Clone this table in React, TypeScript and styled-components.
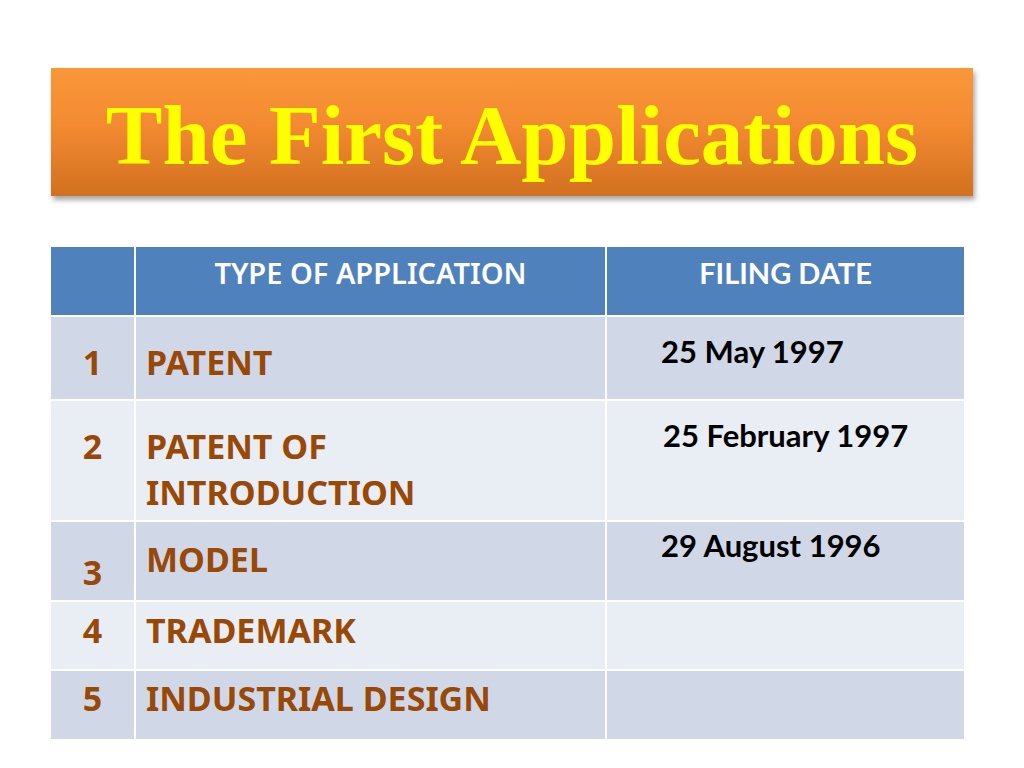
import styled, { createGlobalStyle } from 'styled-components';

const GlobalStyle = createGlobalStyle`
  html, body {
    margin: 0;
    padding: 0;
    background: #fff;
  }
`;

const StyledPage = styled.div`
  width: 1024px;
  height: 768px;
  padding: 68px 0 0 51px;
  box-sizing: border-box;
  display: flex;
  flex-direction: column;
  gap: 51px;
`;

const StyledTitleBar = styled.div`
  width: 922px;
  height: 128px;
  display: flex;
  align-items: center;
  justify-content: center;
  background: linear-gradient(180deg, #fa973a 0%, #f38a31 45%, #d2701f 100%);
  box-shadow: 2px 4px 5px rgba(0, 0, 0, 0.35);
`;

const StyledTitle = styled.h1`
  margin: 0;
  color: #ffff00;
  font-family: 'Liberation Serif', serif;
  font-size: 85px;
  font-weight: 700;
  line-height: 1;
  padding-top: 6px;
`;

const StyledTable = styled.div`
  width: 913px;
  display: grid;
  grid-template-columns: 83px 469px 357px;
  grid-template-rows: 68px 82px 119px 78px 67px 68px;
  gap: 2px;
`;

const StyledHeadCell = styled.div<{ $lato?: boolean }>`
  background: #4f81bd;
  color: #fff;
  font-family: ${p => (p.$lato ? 'Lato' : "'Noto Sans'")}, sans-serif;
  font-weight: ${p => (p.$lato ? 700 : 600)};
  font-size: 29px;
  text-align: center;
  padding-top: 7px;
  line-height: 38px;
`;

const StyledCell = styled.div<{ $alt: boolean; $top: number }>`
  background: ${p => (p.$alt ? '#e9edf4' : '#d0d8e8')};
  padding-top: ${p => p.$top}px;
  box-sizing: border-box;
`;

const StyledNum = styled(StyledCell)`
  color: #984807;
  font-family: 'Noto Sans', sans-serif;
  font-weight: 700;
  font-size: 34px;
  line-height: 46px;
  text-align: center;
`;

const StyledType = styled(StyledCell)`
  color: #984807;
  font-family: 'Noto Sans', sans-serif;
  font-weight: 700;
  font-size: 34px;
  line-height: 46px;
  padding-left: 10px;
`;

const StyledDate = styled(StyledCell)`
  color: #000;
  font-family: Lato, sans-serif;
  font-weight: 700;
  font-size: 31px;
  line-height: 40px;
  padding-left: ${p => (p.$alt ? 56 : 54)}px;
`;

const rows = [
  { n: '1', type: 'PATENT', date: '25 May 1997', numTop: 22, typeTop: 22, dateTop: 14 },
  { n: '2', type: 'PATENT OF\nINTRODUCTION', date: '25 February 1997', numTop: 22, typeTop: 22, dateTop: 14 },
  { n: '3', type: 'MODEL', date: '29 August 1996', numTop: 27, typeTop: 14, dateTop: 3 },
  { n: '4', type: 'TRADEMARK', date: '', numTop: 5, typeTop: 5, dateTop: 0 },
  { n: '5', type: 'INDUSTRIAL DESIGN', date: '', numTop: 4, typeTop: 4, dateTop: 0 },
];

export default function App() {
  return (
    <>
      <GlobalStyle />
      <StyledPage>
        <StyledTitleBar>
          <StyledTitle>The First Applications</StyledTitle>
        </StyledTitleBar>
        <StyledTable>
          <StyledHeadCell />
          <StyledHeadCell>TYPE OF APPLICATION</StyledHeadCell>
          <StyledHeadCell $lato>FILING DATE</StyledHeadCell>
          {rows.map((r, i) => {
            const alt = i % 2 === 1;
            return [
              <StyledNum key={`n${i}`} $alt={alt} $top={r.numTop}>{r.n}</StyledNum>,
              <StyledType key={`t${i}`} $alt={alt} $top={r.typeTop}>
                {r.type.split('\n').map(l => <div key={l}>{l}</div>)}
              </StyledType>,
              <StyledDate key={`d${i}`} $alt={alt} $top={r.dateTop}>{r.date}</StyledDate>,
            ];
          })}
        </StyledTable>
      </StyledPage>
    </>
  );
}
